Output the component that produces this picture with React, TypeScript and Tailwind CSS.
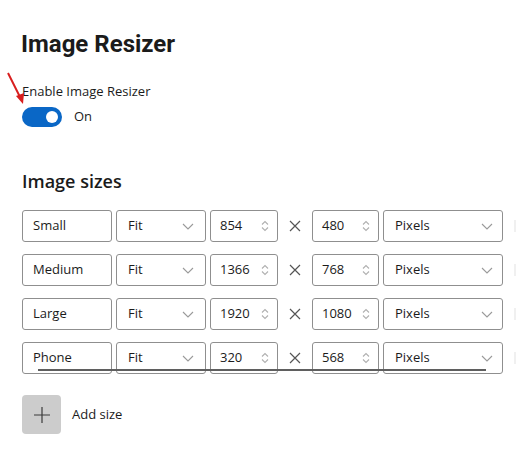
import React from "react";

const font = { fontFamily: '"Open Sans", "Noto Sans", sans-serif' };

interface SizeRow {
  name: string;
  fit: string;
  width: string;
  height: string;
  unit: string;
}

const rows: SizeRow[] = [
  { name: "Small", fit: "Fit", width: "854", height: "480", unit: "Pixels" },
  { name: "Medium", fit: "Fit", width: "1366", height: "768", unit: "Pixels" },
  { name: "Large", fit: "Fit", width: "1920", height: "1080", unit: "Pixels" },
  { name: "Phone", fit: "Fit", width: "320", height: "568", unit: "Pixels" },
];

function Chevron(): React.JSX.Element {
  return (
    <svg width="12" height="7" viewBox="0 0 12 7" fill="none">
      <path d="M1 1l5 5 5-5" stroke="#9a9a9a" strokeWidth="1.1" />
    </svg>
  );
}

function Spinner(): React.JSX.Element {
  return (
    <svg width="8" height="12" viewBox="0 0 8 12" fill="none">
      <path d="M1 4.5l3-3 3 3M1 7.5l3 3 3-3" stroke="#b0b0b0" strokeWidth="1.1" />
    </svg>
  );
}

function Row({ row }: { row: SizeRow }): React.JSX.Element {
  const box = "flex h-8 items-center rounded-[3px] border border-[#8f8f8f] bg-white text-[13px] text-[#1b1b1b]";
  return (
    <div className="flex items-center">
      <div className={`${box} w-[90px] pl-[10px]`}>{row.name}</div>
      <div className={`${box} ml-[4px] w-[90px] justify-between pl-[11px] pr-[11px]`}>
        <span>{row.fit}</span>
        <Chevron />
      </div>
      <div className={`${box} ml-[4px] w-[68px] justify-between pl-[9px] pr-[8px]`}>
        <span>{row.width}</span>
        <Spinner />
      </div>
      <div className="flex w-[34px] justify-center">
        <svg width="12" height="12" viewBox="0 0 12 12" fill="none">
          <path d="M1 1l10 10M11 1L1 11" stroke="#555" strokeWidth="1.2" />
        </svg>
      </div>
      <div className={`${box} w-[67px] justify-between pl-[9px] pr-[8px]`}>
        <span>{row.height}</span>
        <Spinner />
      </div>
      <div className={`${box} ml-[4px] w-[120px] justify-between pl-[11px] pr-[9px]`}>
        <span>{row.unit}</span>
        <Chevron />
      </div>
      <div className="ml-[11px] h-3 w-[2px] bg-[#f0f0f0]" />
    </div>
  );
}

export default function App(): React.JSX.Element {
  return (
    <div className="relative h-[466px] w-[518px] overflow-hidden bg-white pl-[22px] text-[#1b1b1b]" style={font}>
      {/* red annotation arrow */}
      <svg className="absolute left-0 top-[68px]" width="30" height="40" viewBox="0 0 30 40" fill="none">
        <path d="M8 5L21 31" stroke="#d81e1e" strokeWidth="2" />
        <path d="M16 28l7 8 1-11z" fill="#d81e1e" />
      </svg>

      <h1
        className="-ml-[1px] pt-[29px] text-[24px] leading-[31px] font-bold"
        style={{ fontFamily: 'Roboto, "Open Sans", sans-serif' }}
      >
        Image Resizer
      </h1>

      <div className="mt-[22px] text-[13px] leading-[18px]">Enable Image Resizer</div>
      <div className="mt-[7px] flex items-center">
        <div className="flex h-5 w-10 items-center justify-end rounded-full bg-[#0a67c6] pr-[4px]">
          <div className="h-3 w-3 rounded-full bg-white" />
        </div>
        <span className="ml-[12px] text-[13px]">On</span>
      </div>

      <h2 className="mt-[42px] text-[18px] leading-[24px] font-semibold">Image sizes</h2>

      <div className="mt-[17px] flex flex-col gap-3">
        {rows.map((r) => (
          <Row key={r.name} row={r} />
        ))}
      </div>

      {/* underline drawn across the last row */}
      <div className="absolute left-[38px] top-[369px] h-[2px] w-[448px] bg-[#5f5f5f]" />

      <div className="mt-[21px] flex items-center">
        <div className="flex h-[39px] w-[39px] items-center justify-center rounded-[4px] bg-[#cccccc]">
          <svg width="16" height="16" viewBox="0 0 16 16" fill="none">
            <path d="M8 0v16M0 8h16" stroke="#3a3a3a" strokeWidth="1.2" />
          </svg>
        </div>
        <span className="ml-[11px] text-[13px]">Add size</span>
      </div>
    </div>
  );
}
